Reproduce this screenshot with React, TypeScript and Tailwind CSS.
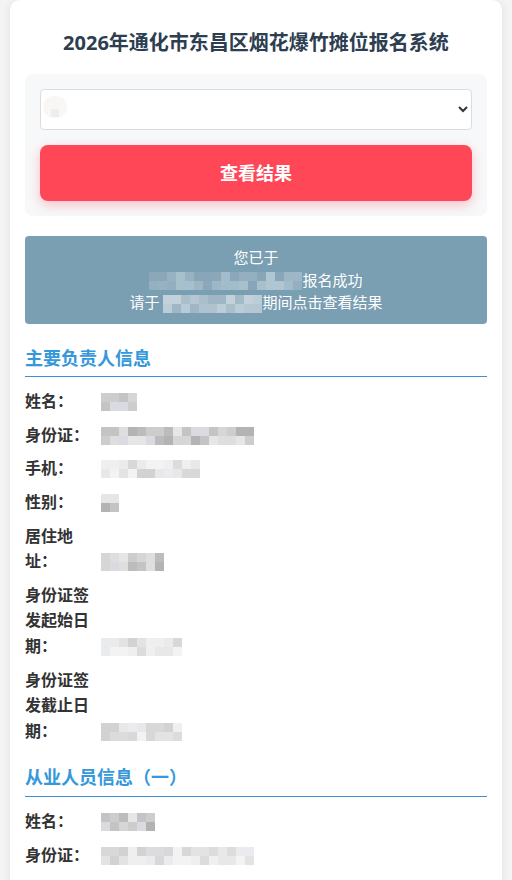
import React from "react";

type Tone = "gray" | "light" | "blue" | "paleblue";

const palettes: Record<Tone, string[]> = {
  gray: ["bg-[#d6d6d6]", "bg-[#c4c4c4]", "bg-[#b3b3b3]", "bg-[#dedede]", "bg-[#cdcdcd]", "bg-[#e6e6e6]", "bg-[#bcbcbc]", "bg-[#d9dbe0]"],
  light: ["bg-[#e8e8e8]", "bg-[#dcdcdc]", "bg-[#efefef]", "bg-[#d2d2d2]", "bg-[#e3e3e3]", "bg-[#f3f3f3]", "bg-[#d8d8d8]", "bg-[#eaebee]"],
  blue: ["bg-[#94b0c0]", "bg-[#a3bccb]", "bg-[#8aa8ba]", "bg-[#9db7c6]", "bg-[#b0c6d2]", "bg-[#88a6b8]", "bg-[#a8bfcc]", "bg-[#97b2c2]"],
  paleblue: ["bg-[#b4c7d2]", "bg-[#a9bfcc]", "bg-[#bccdd7]", "bg-[#a3bac8]", "bg-[#c2d1da]", "bg-[#aec3cf]", "bg-[#b8cad5]", "bg-[#9fb7c5]"],
};

// pixelated stand-in for the blurred personal data
function Mosaic({ cols, tone = "gray", seed = 1 }: { cols: number; tone?: Tone; seed?: number }) {
  const pal = palettes[tone];
  const cells = [];
  for (let i = 0; i < cols * 2; i++) {
    const k = (i * 7 + seed * 13 + ((i * i + seed) % 5)) % pal.length;
    cells.push(<span key={i} className={`block h-[9px] w-[9px] ${pal[k]}`} />);
  }
  return (
    <span className="inline-grid align-middle" style={{ gridTemplateColumns: `repeat(${cols}, 9px)` }}>
      {cells}
    </span>
  );
}

type Field = { label: string; cols: number; tone?: Tone; seed: number };

const leader: Field[] = [
  { label: "姓名：", cols: 4, seed: 2 },
  { label: "身份证：", cols: 17, seed: 5 },
  { label: "手机：", cols: 11, tone: "light", seed: 3 },
  { label: "性别：", cols: 2, seed: 7 },
  { label: "居住地址：", cols: 7, seed: 4 },
  { label: "身份证签发起始日期：", cols: 9, tone: "light", seed: 6 },
  { label: "身份证签发截止日期：", cols: 9, tone: "light", seed: 8 },
];

const worker: Field[] = [
  { label: "姓名：", cols: 6, seed: 9 },
  { label: "身份证：", cols: 17, tone: "light", seed: 1 },
];

function Section({ title, fields, className = "" }: { title: string; fields: Field[]; className?: string }) {
  return (
    <div className={className}>
      <div className="mb-[8px] border-b border-[#3b8fd4] pb-[4px] text-[18px] font-bold leading-[28.8px] text-[#3498db]">
        {title}
      </div>
      {fields.map((f) => (
        <div key={f.label + f.seed} className="flex items-end py-[4px]">
          <div className="w-[76px] shrink-0 text-[16px] font-bold leading-[25.6px] text-[#333]">{f.label}</div>
          <div className="flex h-[25.6px] items-center">
            <Mosaic cols={f.cols} tone={f.tone} seed={f.seed} />
          </div>
        </div>
      ))}
    </div>
  );
}

export default function App() {
  return (
    <div className="min-h-screen bg-[#f4f4f4] px-[10px] font-['Noto_Sans','Noto_Sans_CJK_SC',sans-serif]">
      <div className="rounded-[10px] bg-white px-[15px] pb-[20px] pt-[15px] shadow-[0_0_10px_rgba(0,0,0,0.08)]">
        <h1 className="mb-[16px] mt-[13px] text-center text-[20px] font-bold leading-[30px] text-[#2c3e50]">
          2026年通化市东昌区烟花爆竹摊位报名系统
        </h1>

        <div className="rounded-[8px] bg-[#f7f8fa] p-[15px]">
          <div className="relative">
            <select className="h-[41px] w-full rounded-[4px] border border-[#dcdcdc] bg-white px-[10px] text-[16px] text-[#333] outline-none">
              <option value=""> </option>
            </select>
            <span className="pointer-events-none absolute left-[3px] top-[7px] h-[22px] w-[24px] rounded-full bg-[#f6f5f4] opacity-80" />
            <span className="pointer-events-none absolute left-[11px] top-[20px] h-[8px] w-[8px] bg-[#ededed]" />
          </div>
          <button
            type="button"
            className="mt-[15px] h-[56px] w-full rounded-[8px] bg-[#ff4757] text-[18px] font-bold text-white shadow-[0_4px_12px_rgba(255,71,87,0.3)]"
          >
            查看结果
          </button>
        </div>

        <div className="mb-[20px] mt-[20px] rounded-[4px] bg-[#7a9eb2] px-[10px] py-[10px] text-center text-[15px] leading-[22.5px] text-white">
          <div>您已于</div>
          <div>
            <Mosaic cols={17} tone="blue" seed={3} />
            报名成功
          </div>
          <div>
            请于 <Mosaic cols={11} tone="paleblue" seed={2} />期间点击查看结果
          </div>
        </div>

        <Section title="主要负责人信息" fields={leader} />
        <Section title="从业人员信息（一）" fields={worker} className="mt-[15px]" />
      </div>
    </div>
  );
}
